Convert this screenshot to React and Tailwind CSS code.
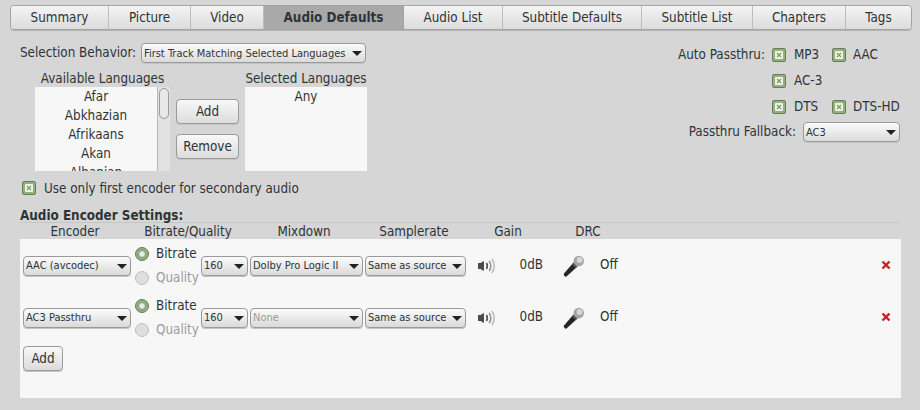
import React from "react";

const tabs = [
  ["Summary", "w-[98px]"],
  ["Picture", "w-[82px]"],
  ["Video", "w-[73px]"],
  ["Audio Defaults", "w-[140px]"],
  ["Audio List", "w-[99px]"],
  ["Subtitle Defaults", "w-[139px]"],
  ["Subtitle List", "w-[111px]"],
  ["Chapters", "w-[93px]"],
  ["Tags", "flex-1"],
];

const languages = ["Afar", "Abkhazian", "Afrikaans", "Akan", "Albanian"];

const Arrow = () => (
  <span className="ml-auto h-0 w-0 shrink-0 border-x-[5px] border-t-[5px] border-x-transparent border-t-[#1f2326]" />
);

const Select = ({ label, width, dim, lift }) => (
  <div
    className={`flex h-[20px] shrink-0 items-center overflow-hidden whitespace-nowrap rounded-[4px] border border-[#9a9a9a] bg-gradient-to-b from-[#fbfbfb] to-[#dadada] pl-[2px] pr-[3px] text-[11px] shadow-[0_1px_0_#c4c4c4] ${width} ${dim ? "text-[#9b9b9b]" : "text-[#2e3436]"}`}
  >
    <span className={lift ? "pb-[2px]" : ""}>{label}</span>
    <Arrow />
  </div>
);

const Button = ({ label, width }) => (
  <div
    className={`flex h-[25px] items-center justify-center rounded-[4px] border border-[#9a9a9a] bg-gradient-to-b from-[#f8f8f8] to-[#dcdcdc] shadow-[0_1px_0_#c4c4c4] ${width}`}
  >
    {label}
  </div>
);

const Check = () => (
  <span className="flex h-[14px] w-[14px] shrink-0 items-center justify-center rounded-[2px] border border-[#6b7a5e] bg-[#92b27a]">
    <svg width="8" height="8" viewBox="0 0 8 8">
      <rect width="8" height="8" rx="1" fill="#eef3ea" />
      <path d="M2 2l4 4M6 2L2 6" stroke="#7d9a68" strokeWidth="1.3" />
    </svg>
  </span>
);

const Radio = ({ on }) =>
  on ? (
    <span className="flex h-[14px] w-[14px] shrink-0 items-center justify-center rounded-full border border-[#6b7a5e] bg-[#92b27a]">
      <span className="h-[8px] w-[8px] rounded-full border border-[#7d8f6e] bg-[#e8e8e8]" />
    </span>
  ) : (
    <span className="h-[14px] w-[14px] shrink-0 rounded-full border border-[#bdbdbd] bg-[#dedede]" />
  );

const Speaker = () => (
  <svg width="19" height="16" viewBox="0 0 19 16" fill="none">
    <path d="M1 5h2.5L7 3v10l-3.5-2H1z" fill="#4a4a4a" />
    <path d="M9.5 5c1 1.8 1 4.2 0 6" stroke="#4f4f4f" strokeWidth="1.6" />
    <path d="M12.2 2.8c1.9 3.1 1.9 7.3 0 10.4" stroke="#8f8f8f" strokeWidth="1.5" />
    <path d="M15 1c2.7 4.2 2.7 9.8 0 14" stroke="#b8b8b8" strokeWidth="1.5" />
  </svg>
);

const Mic = () => (
  <svg width="22" height="22" viewBox="0 0 22 22">
    <path d="M1 18.5L10.5 7.5l4 4L3.5 21.5q-1 .5-2-.5t-.5-2.5z" fill="#262626" />
    <path d="M9 9.5l1.5-2 4 4-2 1.5z" fill="#555" />
    <circle cx="15.8" cy="6" r="5.2" fill="#a3a3a3" />
    <circle cx="16.6" cy="5" r="3" fill="#d6d6d6" />
  </svg>
);

const Remove = () => (
  <svg width="10" height="10" viewBox="0 0 10 10">
    <path d="M1.5 1.5l7 7M8.5 1.5l-7 7" stroke="#cc1f1f" strokeWidth="2.4" />
  </svg>
);

const EncoderRow = ({ encoder, mixdown, dimMix }) => (
  <div className="grid h-[48px] grid-cols-[110px_68px_49px_115px_112px_67px_88px_1fr] items-center">
    <Select label={encoder} width="w-[108px]" lift />
    <div className="flex flex-col">
      <div className="flex h-[24px] items-center gap-[7px] pl-[2px]">
        <Radio on />
        <span>Bitrate</span>
      </div>
      <div className="flex h-[24px] items-center gap-[7px] pl-[2px] text-[#9b9b9b]">
        <Radio />
        <span>Quality</span>
      </div>
    </div>
    <Select label="160" width="w-[47px]" lift />
    <Select label={mixdown} width="w-[113px]" dim={dimMix} lift />
    <Select label="Same as source" width="w-[101px]" lift />
    <div className="flex items-center justify-between pr-[1px]">
      <Speaker />
      <span className="pb-[2px]">0dB</span>
    </div>
    <div className="flex items-center gap-[15px] pl-[19px]">
      <Mic />
      <span className="pb-[2px]">Off</span>
    </div>
    <div className="flex justify-end pb-[2px] pr-[7px]">
      <Remove />
    </div>
  </div>
);

export default function App() {
  return (
    <div
      className="h-[410px] w-[920px] overflow-hidden bg-[#d6d6d6] text-[13.33px] leading-none text-[#2e3436] [font-stretch:condensed]"
      style={{ fontFamily: '"DejaVu Sans Condensed", "DejaVu Sans", sans-serif' }}
    >
      {/* tab bar */}
      <div className="pl-[10px] pr-[8px] pt-[5px]">
        <div className="flex h-[25px] overflow-hidden rounded-[4px] border border-[#a3a3a3] shadow-[0_1px_0_#b5b5b5]">
          {tabs.map(([name, width]) => (
            <div
              key={name}
              className={
                name === "Audio Defaults"
                  ? `flex items-center justify-center border-r border-[#a3a3a3] bg-[#a9a9a9] font-bold ${width}`
                  : `flex items-center justify-center border-r border-[#bdbdbd] bg-gradient-to-b from-[#f4f4f4] to-[#dcdcdc] last:border-r-0 ${width}`
              }
            >
              {name}
            </div>
          ))}
        </div>
      </div>

      <div className="flex pt-[13px]">
        {/* language selection */}
        <div className="w-[600px] shrink-0 pl-[20px]">
          <div className="flex h-[20px] items-center">
            <span className="w-[121px] shrink-0 whitespace-nowrap">Selection Behavior:</span>
            <Select label="First Track Matching Selected Languages" width="w-[225px]" />
          </div>
          <div className="flex pl-[15px] pt-[7px]">
            <div className="w-[135px]">
              <div className="flex h-[17px] items-center justify-center">Available Languages</div>
              <div className="flex h-[84px] overflow-hidden">
                <div className="w-[122px] overflow-hidden bg-[#f7f7f7] text-center">
                  {languages.map((lang) => (
                    <div key={lang} className="flex h-[19px] items-center justify-center">
                      {lang}
                    </div>
                  ))}
                </div>
                <div className="w-[13px] border-l border-[#b8b8b8] bg-[#e2e2e2] pl-[1px] pt-[1px]">
                  <div className="h-[31px] w-[10px] rounded-[5px] border border-[#9a9a9a] bg-[#e8e8e8]" />
                </div>
              </div>
            </div>
            <div className="flex w-[75px] flex-col gap-[10px] pl-[6px] pt-[29px]">
              <Button label="Add" width="w-[63px]" />
              <Button label="Remove" width="w-[63px]" />
            </div>
            <div className="w-[122px]">
              <div className="flex h-[17px] items-center justify-center whitespace-nowrap">Selected Languages</div>
              <div className="h-[84px] bg-[#f7f7f7] text-center">
                <div className="flex h-[19px] items-center justify-center">Any</div>
              </div>
            </div>
          </div>
          <div className="mt-[10px] flex h-[14px] items-center gap-2 pl-[2px]">
            <Check />
            <span className="pt-[1px]">Use only first encoder for secondary audio</span>
          </div>
        </div>

        {/* passthru */}
        <div className="flex-1">
          <div className="flex h-[24px] items-center justify-end pr-[20px]">
            <span className="mr-[7px] whitespace-nowrap">Auto Passthru:</span>
            <div className="flex w-[128px]">
              <div className="flex w-[60px] items-center gap-2">
                <Check />
                <span>MP3</span>
              </div>
              <div className="flex items-center gap-[7px] whitespace-nowrap">
                <Check />
                <span>AAC</span>
              </div>
            </div>
          </div>
          <div className="mt-[1px] flex h-[26px] items-center justify-end pr-[20px]">
            <div className="flex w-[128px] items-center gap-2">
              <Check />
              <span>AC-3</span>
            </div>
          </div>
          <div className="flex h-[26px] items-center justify-end pr-[20px]">
            <div className="flex w-[128px]">
              <div className="flex w-[60px] items-center gap-2">
                <Check />
                <span>DTS</span>
              </div>
              <div className="flex items-center gap-[7px] whitespace-nowrap">
                <Check />
                <span>DTS-HD</span>
              </div>
            </div>
          </div>
          <div className="flex h-[24px] items-center justify-end pr-[20px]">
            <span className="mr-[7px] whitespace-nowrap">Passthru Fallback:</span>
            <Select label="AC3" width="w-[97px]" />
          </div>
        </div>
      </div>

      {/* encoder settings */}
      <div className="px-[20px] pt-[13px]">
        <div className="flex h-[15px] items-center border-b border-[#c6c6c6] pt-[1px] font-bold">Audio Encoder Settings:</div>
        <div className="grid h-[16px] grid-cols-[110px_116px_116px_104px_84px_76px] items-center pt-[1px] text-center">
          <span>Encoder</span>
          <span>Bitrate/Quality</span>
          <span>Mixdown</span>
          <span>Samplerate</span>
          <span>Gain</span>
          <span>DRC</span>
        </div>
        <div className="h-[159px] w-[881px] bg-[#f7f7f7] px-[3px] pt-[3px]">
          <div className="flex flex-col gap-[4px]">
            <EncoderRow encoder="AAC (avcodec)" mixdown="Dolby Pro Logic II" />
            <EncoderRow encoder="AC3 Passthru" mixdown="None" dimMix />
          </div>
          <div className="pt-[4px]">
            <Button label="Add" width="w-[40px]" />
          </div>
        </div>
      </div>
    </div>
  );
}
